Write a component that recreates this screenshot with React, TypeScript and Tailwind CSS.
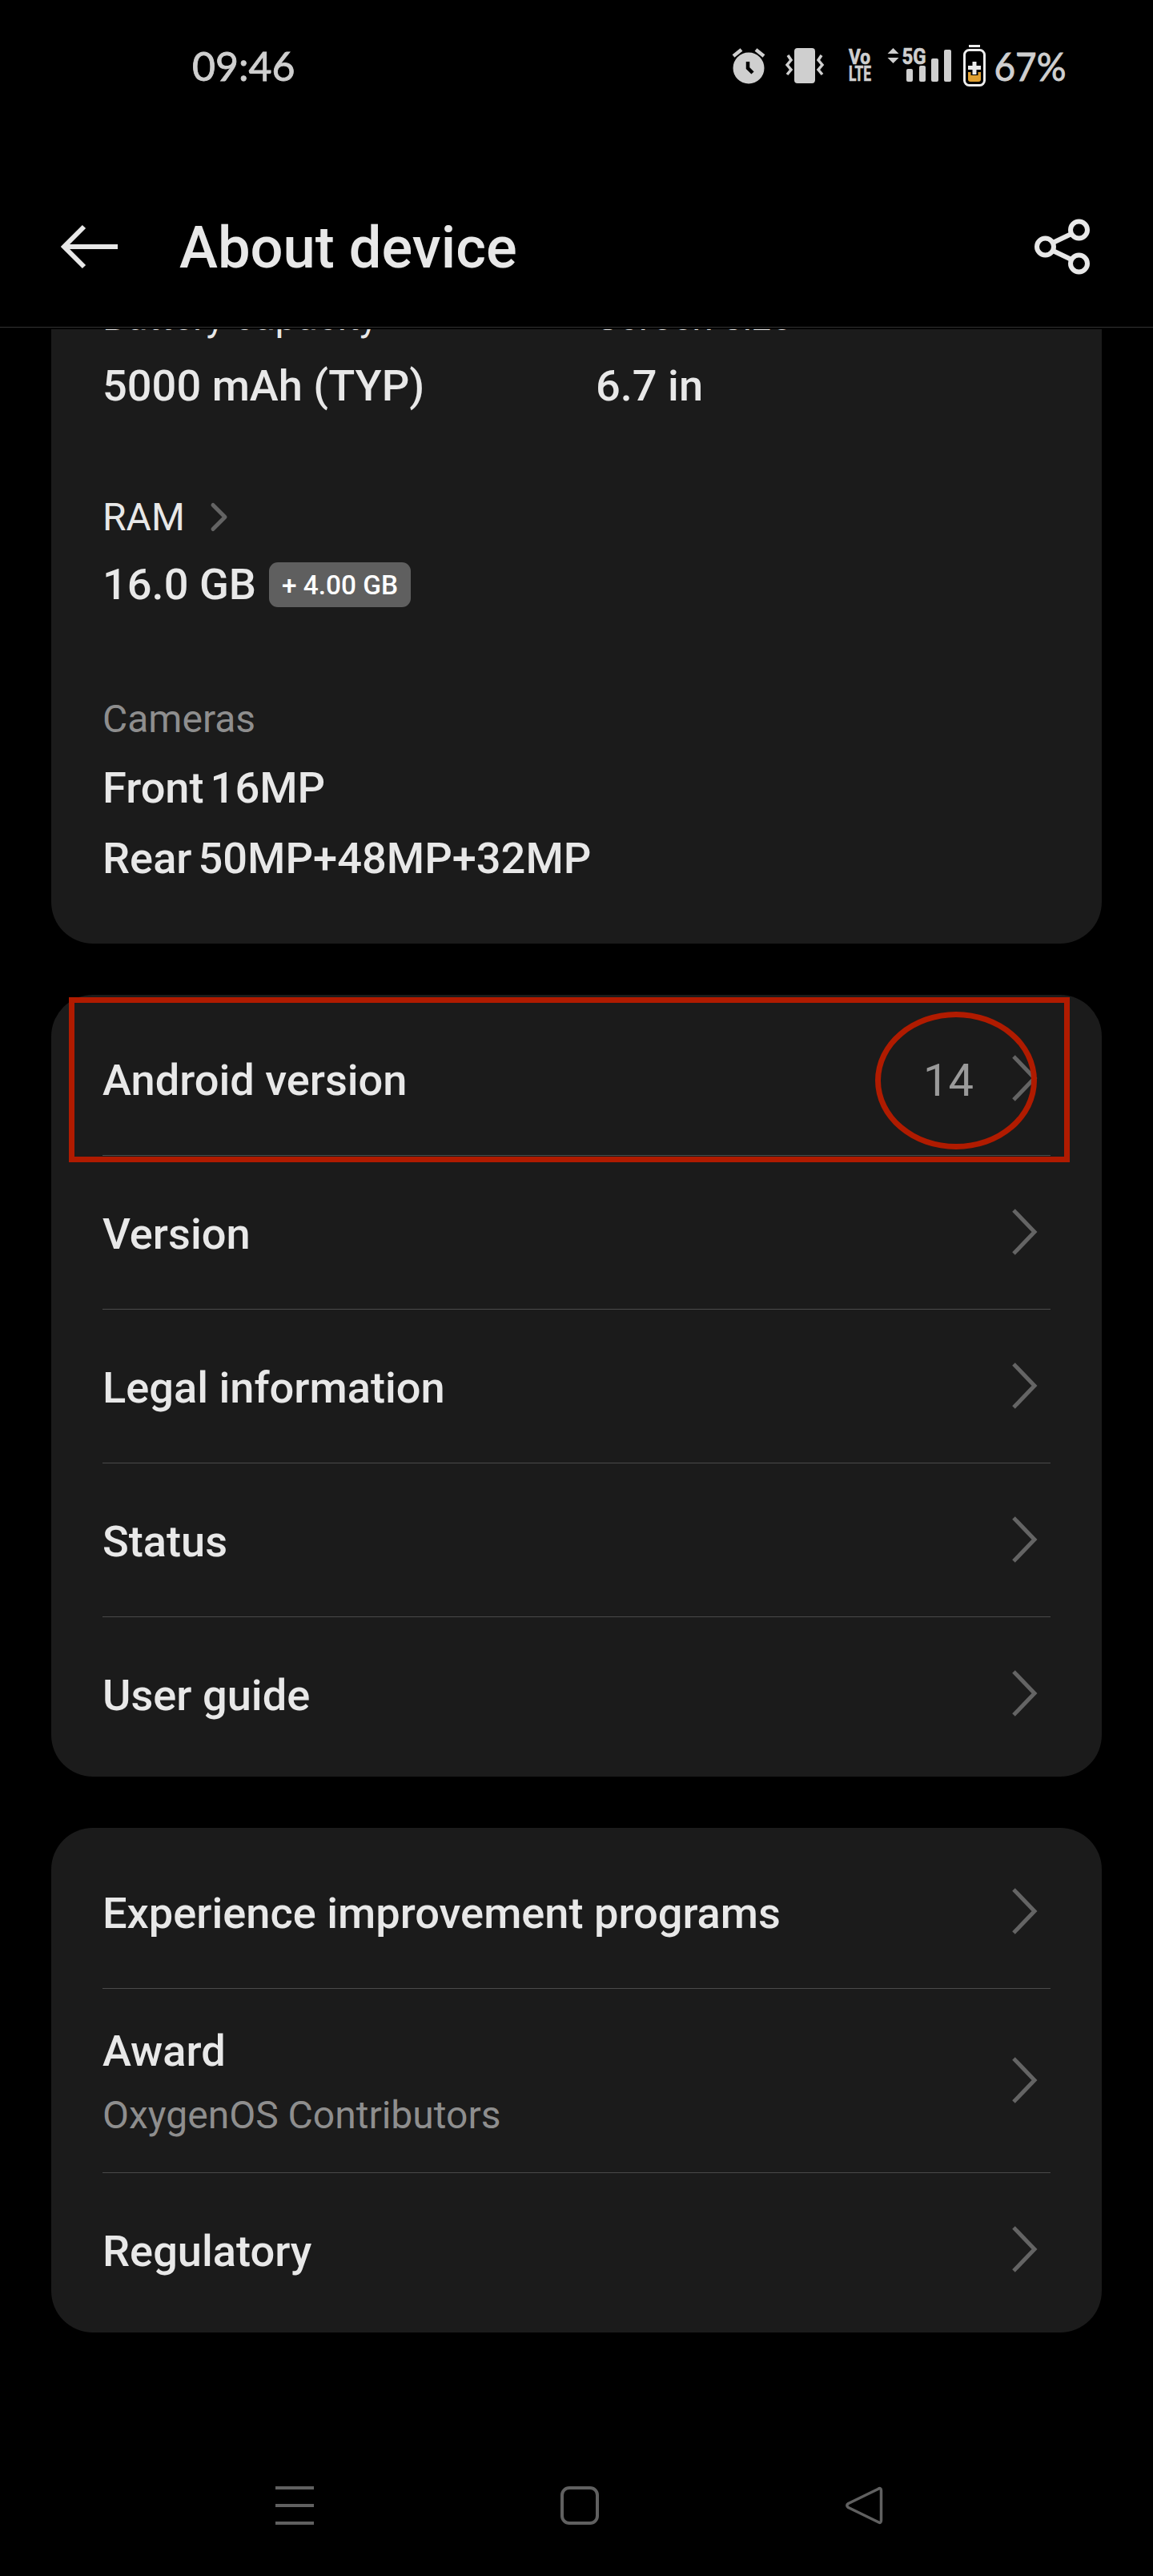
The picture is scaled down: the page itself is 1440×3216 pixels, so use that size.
import React from "react";

function Chevron() {
  return (
    <svg width="34" height="60" viewBox="0 0 34 60" fill="none" className="shrink-0">
      <path d="M4 3L30 30L4 57" stroke="#646464" strokeWidth="5" />
    </svg>
  );
}

function Divider() {
  return <div className="relative mx-16 -mb-px h-px bg-[#4a4a4a]" />;
}

function Row({ title, sub, value }: { title: string; sub?: string; value?: string }) {
  return (
    <div className={sub ? "flex h-[230px] items-center pl-16 pr-20" : "flex h-48 items-center pl-16 pr-20"}>
      <div className={sub ? "flex flex-1 flex-col pt-[7px]" : "flex flex-1 flex-col pt-[5px]"}>
        <span className="text-[54.2px] font-medium leading-[80px] text-[#e8e8e8]">{title}</span>
        {sub && <span className="text-[48px] leading-[80px] text-[#8e8e8e]">{sub}</span>}
      </div>
      {value && <span className="mr-[46px] pt-[5px] text-[56px] leading-[80px] text-[#9a9a9a]">{value}</span>}
      <Chevron />
    </div>
  );
}

function StatusIcons() {
  return (
    <svg width="480" height="110" viewBox="0 0 480 110" fill="#cfcfcf" className="shrink-0">
      {/* Alarm */}
      <circle cx="55" cy="55" r="19.5" />
      <path d="M36 40L46 32M74 40L64 32" stroke="#cfcfcf" strokeWidth="4.5" />
      <path d="M54 47V55L60 61" stroke="#000" strokeWidth="4.5" fill="none" />
      {/* Vibrate */}
      <rect x="112" y="30" width="26" height="44" rx="4" />
      <path d="M104 39L108 45L103 51L108 57L103 63" stroke="#cfcfcf" strokeWidth="3.5" fill="none" />
      <path d="M146 39L142 45L147 51L142 57L147 63" stroke="#cfcfcf" strokeWidth="3.5" fill="none" />
      {/* Network */}
      <g className="font-['Roboto'] font-bold" stroke="#cfcfcf" strokeWidth="0.7">
        <text x="180" y="50" fontSize="25" textLength="27" lengthAdjust="spacingAndGlyphs">Vo</text>
        <text x="180" y="71" fontSize="26" textLength="28" lengthAdjust="spacingAndGlyphs">LTE</text>
        <text x="246.500" y="50" fontSize="28" textLength="30" lengthAdjust="spacingAndGlyphs">5G</text>
      </g>
      <path d="M228.500 37L235.500 30L242.500 37ZM228.500 42L235.500 49L242.500 42Z" />
      <rect x="252" y="56" width="8" height="16" rx="2" />
      <rect x="268" y="52" width="8" height="20" rx="2" />
      <rect x="283" y="43" width="9" height="29" rx="2" />
      <rect x="299" y="32" width="9" height="40" rx="2" />
      {/* Battery */}
      <rect x="330" y="26" width="14" height="3" fill="#ededed" />
      <rect x="324.500" y="32.500" width="25" height="44" rx="6" fill="none" stroke="#ededed" strokeWidth="3" />
      <path d="M329 60H345V69Q345 72 342 72H332Q329 72 329 69Z" fill="#e0a030" />
      <path d="M337 46V64M328 54.500H346" stroke="#000" strokeWidth="9" />
      <path d="M337 47V63M329 54.500H345" stroke="#ededed" strokeWidth="5" />
      <text x="361.500" y="70.500" fontSize="49" textLength="90" lengthAdjust="spacingAndGlyphs" stroke="#cfcfcf" strokeWidth="0.9" className="font-['Lato']">67%</text>
    </svg>
  );
}

export default function App() {
  return (
    <div className="flex h-[3216px] w-[1440px] flex-col overflow-hidden bg-black font-['Roboto',sans-serif]">
      {/* Status bar */}
      <div className="flex h-[200px] items-start pl-[240px] pr-20 pt-[30px]">
        <span className="w-[640px] pt-4 font-['Lato',sans-serif] text-[50px] leading-[72px] text-[#cfcfcf] [-webkit-text-stroke:0.9px_#cfcfcf]">09:46</span>
        <StatusIcons />
      </div>

      {/* App bar */}
      <div className="flex h-[209px] items-start border-b border-[#333] px-[72px] pt-[64px]">
        <svg width="80" height="88" viewBox="0 0 80 88" fill="none" stroke="#e8e8e8" strokeWidth="6">
          <path d="M75 44H9M33 19L8 44L33 69" />
        </svg>
        <h1 className="ml-[72px] flex-1 pt-px text-[72.3px] font-medium leading-[90px] text-[#e8e8e8]">About device</h1>
        <svg width="80" height="88" viewBox="0 0 80 88" fill="none" stroke="#e8e8e8" strokeWidth="6">
          <circle cx="17.500" cy="44" r="10.500" />
          <circle cx="59.500" cy="23" r="10.500" />
          <circle cx="59.500" cy="65" r="10.500" />
          <path d="M27 39L50 28M27 49L50 60" />
        </svg>
      </div>

      <main className="flex flex-col px-16 pt-[2px]">
        {/* Hardware specs, scrolled under the app bar */}
        <section className="h-[767px] overflow-hidden rounded-b-[52px] bg-[#1b1b1b] px-16 text-[54.2px] font-medium leading-[64px] text-[#e8e8e8]">
          <div className="-mt-[47px] grid grid-cols-[616px_1fr] text-[48px] font-normal">
            <span>Battery capacity</span>
            <span>Screen size</span>
          </div>
          <div className="mt-[22px] grid grid-cols-[616px_1fr]">
            <span>5000 mAh (TYP)</span>
            <span>6.7 in</span>
          </div>
          <div className="mt-[100px] flex items-center text-[48px] font-normal">
            RAM
            <svg width="30" height="44" viewBox="0 0 30 44" fill="none" className="ml-[29px]">
              <path d="M6 6.500L21 21.500L6 36.500" stroke="#646464" strokeWidth="5" strokeLinecap="round" strokeLinejoin="round" />
            </svg>
          </div>
          <div className="mt-5 flex h-16 items-center">
            16.0 GB
            <span className="ml-4 flex h-14 w-[177px] items-center justify-center rounded-[11px] bg-[#5f5f5f] pt-px text-[33.4px] text-white">+ 4.00 GB</span>
          </div>
          <div className="mt-[104px] text-[48px] font-normal text-[#8e8e8e]">Cameras</div>
          <div className="mt-[22px] flex gap-2"><span>Front</span><span>16MP</span></div>
          <div className="mt-6 flex gap-2"><span>Rear</span><span>50MP+48MP+32MP</span></div>
        </section>

        {/* Software information */}
        <section className="relative mt-16 h-[976px] rounded-[52px] bg-[#1b1b1b] pt-2">
          <Row title="Android version" value="14" />
          <Divider />
          <Row title="Version" />
          <Divider />
          <Row title="Legal information" />
          <Divider />
          <Row title="Status" />
          <Divider />
          <Row title="User guide" />
          <div className="absolute left-[22px] top-[3px] h-[206px] w-[1250px] border-[7px] border-[#b01b00]" />
          <div className="absolute left-[1029px] top-[21px] h-[172px] w-[202px] rounded-[50%] border-[7px] border-[#b01b00]" />
        </section>

        {/* Programs and notices */}
        <section className="mt-16 h-[630px] rounded-[52px] bg-[#1b1b1b] pt-2">
          <Row title="Experience improvement programs" />
          <Divider />
          <Row title="Award" sub="OxygenOS Contributors" />
          <Divider />
          <Row title="Regulatory" />
        </section>
      </main>

      {/* System navigation */}
      <nav className="mt-[184px] flex justify-between pl-[336px] pr-[329px]">
        <svg width="64" height="64" viewBox="0 0 64 64" stroke="#606060" strokeWidth="4">
          <path d="M8 10H56M8 32H56M8 54H56" />
        </svg>
        <svg width="64" height="64" viewBox="0 0 64 64" fill="none" stroke="#606060" strokeWidth="4">
          <rect x="10" y="10" width="44" height="44" rx="9" />
        </svg>
        <svg width="64" height="64" viewBox="0 0 64 64" fill="none" stroke="#606060" strokeWidth="3.500" strokeLinejoin="round">
          <path d="M53.500 13.500V50.500Q53.500 55 49.500 52.500L12.500 34.500Q9 32 12.500 29.500L49.500 11.500Q53.500 9 53.500 13.500Z" />
        </svg>
      </nav>
    </div>
  );
}
